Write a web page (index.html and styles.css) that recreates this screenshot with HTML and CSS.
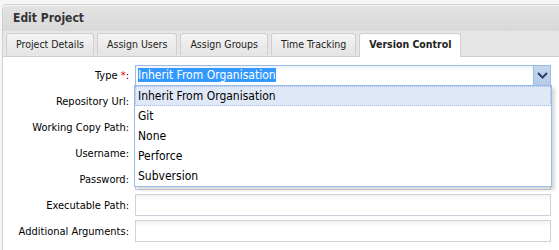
FILE: index.html
```html
<!DOCTYPE html>
<html lang="en">
<head>
  <meta charset="UTF-8" />
  <title>Edit Project</title>
  <link rel="stylesheet" href="styles.css">
</head>
<body>

  <div class="panel">
    <div class="panel-header">Edit Project</div>

    <ul class="tabs">
      <li class="tab">Project Details</li>
      <li class="tab">Assign Users</li>
      <li class="tab">Assign Groups</li>
      <li class="tab">Time Tracking</li>
      <li class="tab active">Version Control</li>
    </ul>

    <div class="panel-body">
      <form class="form">
        <div class="row">
          <label>Type <span class="req">*</span>:</label>
          <div class="combo">
            <div class="combo-text"><span class="selected">Inherit From Organisation</span></div>
            <div class="trigger">
              <svg width="11" height="7" viewBox="0 0 11 7">
                <path d="M1 1 L5.5 5.5 L10 1" fill="none" stroke="#2b3f6c" stroke-width="2"/>
              </svg>
            </div>
          </div>
        </div>
        <div class="row">
          <label>Repository Url:</label>
          <input type="text" class="field">
        </div>
        <div class="row">
          <label>Working Copy Path:</label>
          <input type="text" class="field">
        </div>
        <div class="row">
          <label>Username:</label>
          <input type="text" class="field">
        </div>
        <div class="row">
          <label>Password:</label>
          <input type="password" class="field">
        </div>
        <div class="row">
          <label>Executable Path:</label>
          <input type="text" class="field">
        </div>
        <div class="row">
          <label>Additional Arguments:</label>
          <input type="text" class="field">
        </div>
      </form>

      <ul class="combo-list">
        <li class="item hover">Inherit From Organisation</li>
        <li class="item">Git</li>
        <li class="item">None</li>
        <li class="item">Perforce</li>
        <li class="item">Subversion</li>
      </ul>
    </div>
  </div>

</body>
</html>
```

FILE: styles.css
```css
html, body {
  height: 100%;
}
body {
  font-family: "DejaVu Sans", "Liberation Sans", sans-serif;
  font-stretch: condensed;
  margin: 0;
  background: #f6f6f6;
  color: #000;
  overflow: hidden;
}
.panel {
  margin: 4px -20px 0 2px;
  border: 1px solid #d0d0d0;
  border-bottom: none;
  border-radius: 5px 5px 0 0;
  background: #fff;
  height: calc(100% - 5px);
}
.panel-header {
  height: 25px;
  line-height: 25px;
  padding-left: 10px;
  font-size: 12px;
  font-weight: bold;
  color: #333;
  background: linear-gradient(#e2e2e2, #d9d9d9);
  border-radius: 5px 5px 0 0;
  border-top: 1px solid #f4f4f4;
}
.tabs {
  list-style: none;
  margin: 0;
  padding: 2px 0 0 3px;
  display: flex;
  gap: 3px;
  background: #e6e6e6;
  border-bottom: 1px solid #d0d0d0;
  height: 23px;
}
.tab {
  height: 21px;
  line-height: 21px;
  padding: 0 9px;
  font-size: 10.5px;
  color: #222;
  border: 1px solid #cfcfcf;
  border-bottom: none;
  border-radius: 3px 3px 0 0;
  background: linear-gradient(#f4f4f4, #e4e4e4);
}
.tab.active {
  background: #fff;
  font-weight: bold;
  height: 23px;
  color: #222;
}
.panel-body {
  position: relative;
  padding: 7px 0 0 0;
}
.form {
  display: flex;
  flex-direction: column;
  gap: 4px;
}
.row {
  display: flex;
  align-items: center;
  height: 22px;
}
.row label {
  width: 126px;
  text-align: right;
  padding-right: 6px;
  font-size: 11px;
}
.req {
  color: #e00;
}
.field {
  width: 416px;
  height: 22px;
  box-sizing: border-box;
  margin: 0;
  border: 1px solid #cfd0dc;
  background: linear-gradient(#f2f3f3, #fff 6px);
}
.combo {
  width: 416px;
  height: 21px;
  box-sizing: border-box;
  border: 1px solid #99bbe8;
  display: flex;
  background: linear-gradient(#f0f3f7, #fff 6px);
}
.combo-text {
  flex: 1;
  padding: 2px 0 0 2px;
  font-size: 12px;
}
.selected {
  background: #3399ff;
  color: #fff;
}
.trigger {
  width: 16px;
  border-left: 1px solid #99bbe8;
  background: linear-gradient(#c4d7ee, #b5cbe7);
  display: flex;
  align-items: center;
  justify-content: center;
}
.combo-list {
  position: absolute;
  left: 131px;
  top: 28px;
  width: 416px;
  margin: 0;
  padding: 0;
  list-style: none;
  background: #fff;
  border: 1px solid #99bbe8;
  box-shadow: 3px 3px 3px rgba(0, 0, 0, 0.15);
}
.item {
  height: 20px;
  line-height: 20px;
  padding-left: 3px;
  font-size: 12px;
  box-sizing: border-box;
}
.item.hover {
  background: #dfe8f6;
  border: 1px dotted #a3bae9;
  line-height: 18px;
  padding-left: 2px;
}
```
